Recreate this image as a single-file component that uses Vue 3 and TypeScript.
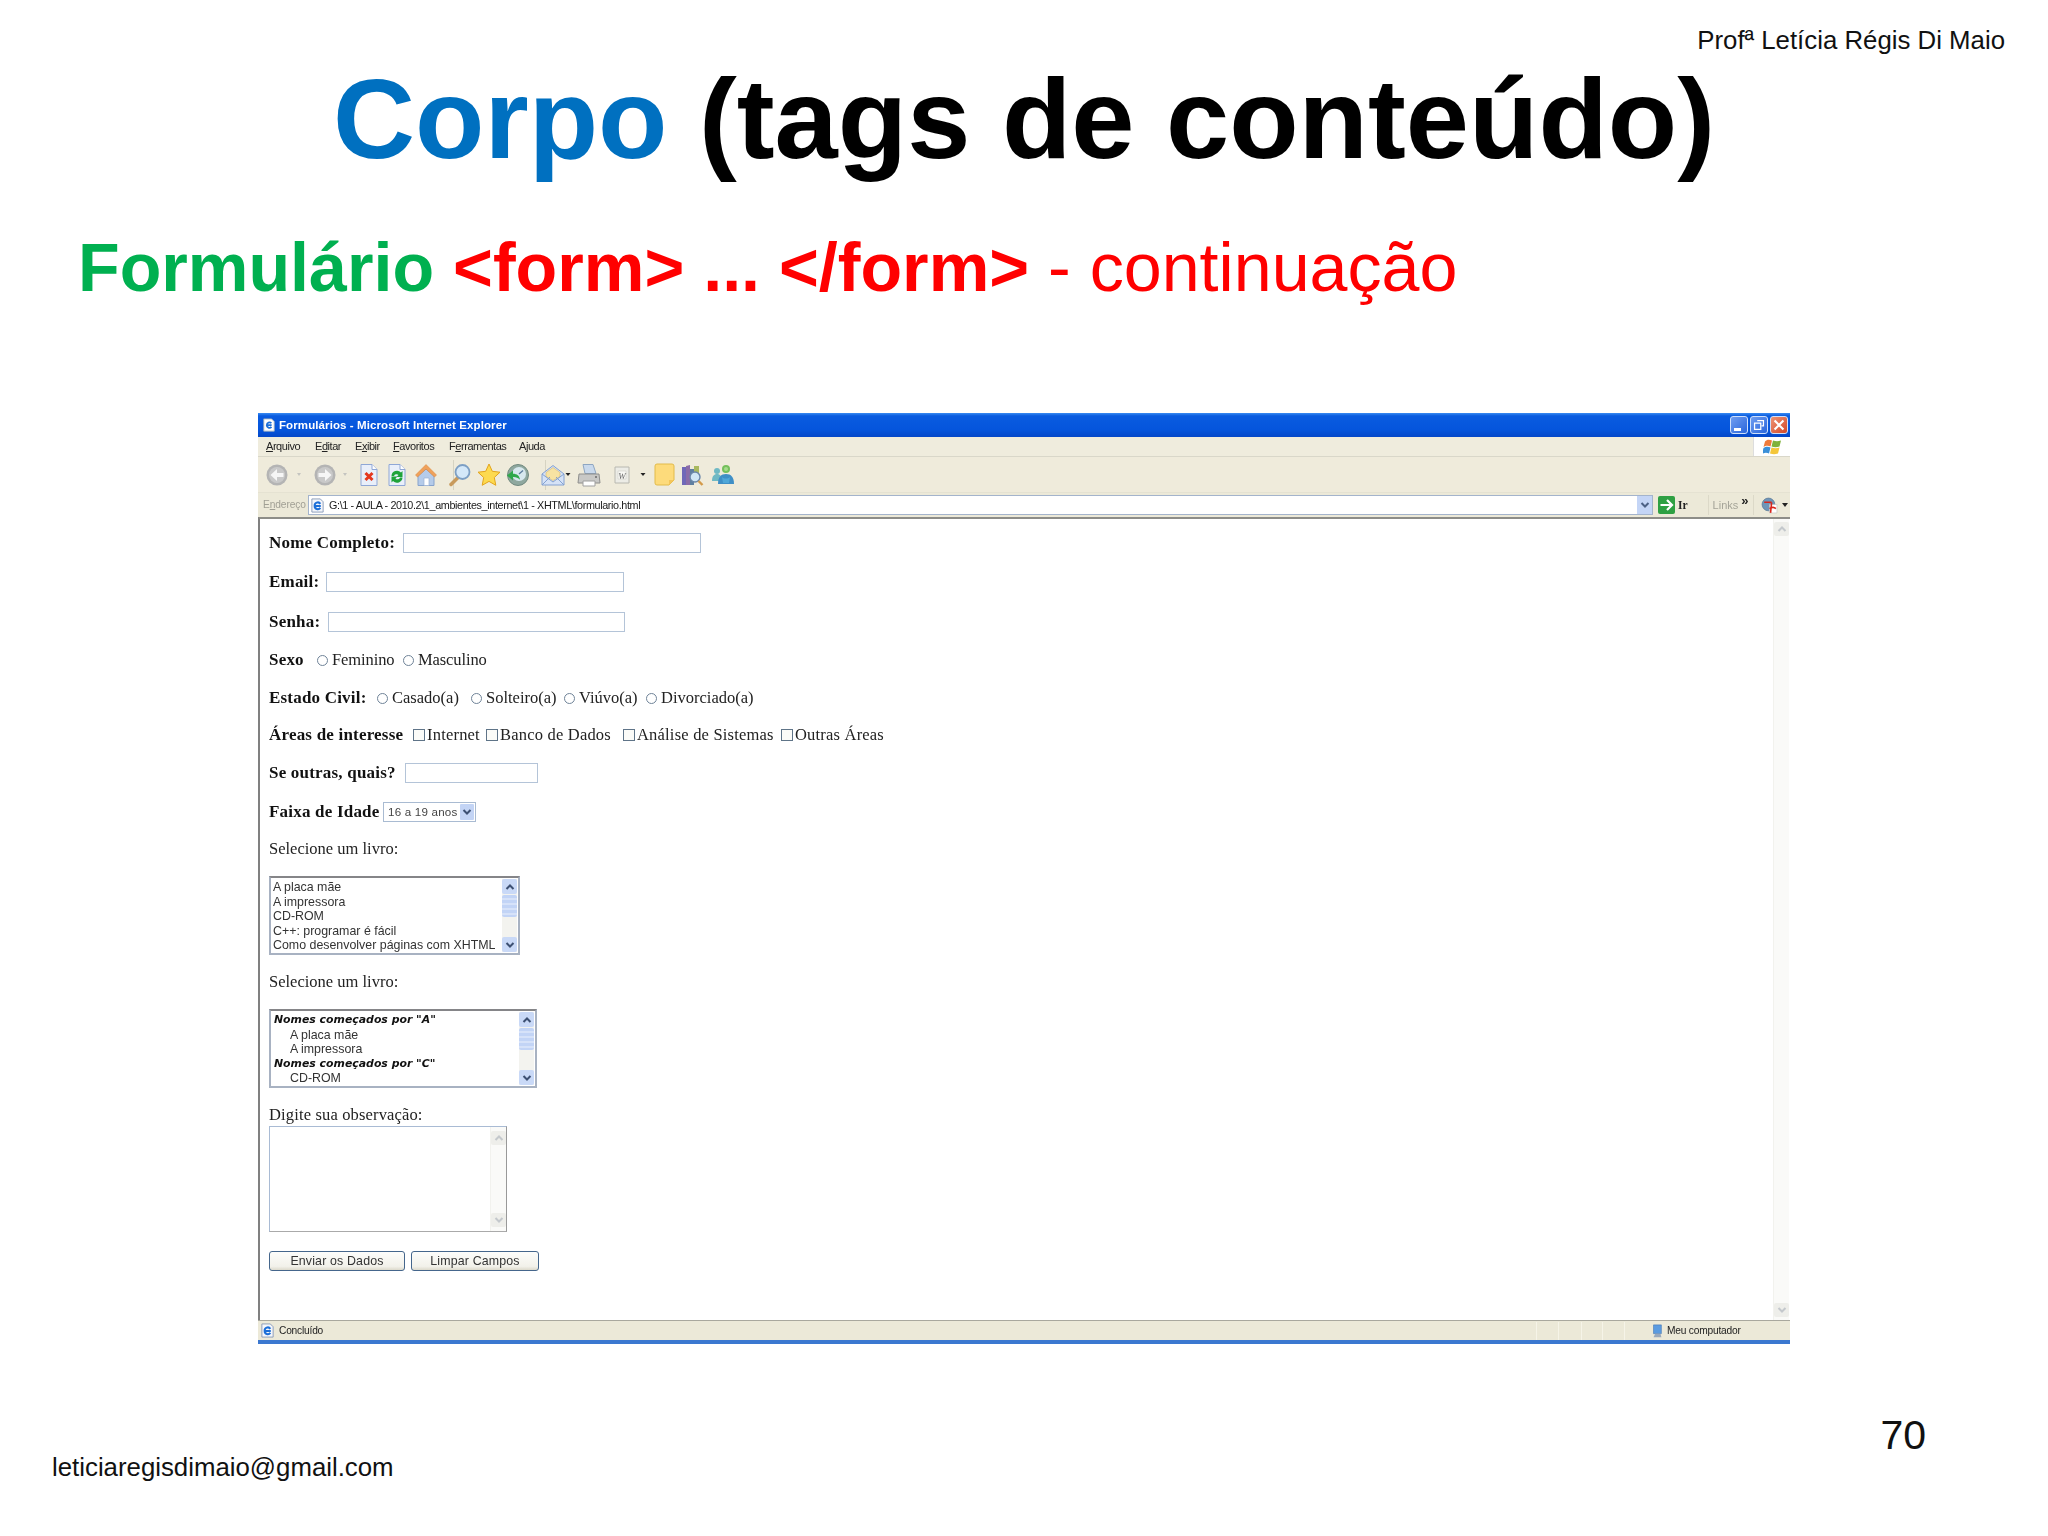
<script setup lang="ts">
interface Tool { cx: number; w: number; svg: string }
const doc = 'M4 1.5h11l5 5v16H4z'
const rawTools: Tool[] = [
  { cx: 277, w: 24, svg: '<circle cx="12" cy="12" r="10.5" fill="#b4b4b4"/><circle cx="12" cy="12" r="8" fill="#c9c9c9"/><path d="M5.5 12l6.5-6v4h6.5v4H12v4z" fill="#f6f6f6"/>' },
  { cx: 299, w: 6, svg: '<path d="M1 10h4l-2 3z" fill="#c4c4c0"/>' },
  { cx: 325, w: 24, svg: '<circle cx="12" cy="12" r="10.5" fill="#b4b4b4"/><circle cx="12" cy="12" r="8" fill="#c9c9c9"/><path d="M18.5 12l-6.5-6v4H5.5v4H12v4z" fill="#f6f6f6"/>' },
  { cx: 345, w: 6, svg: '<path d="M1 10h4l-2 3z" fill="#c4c4c0"/>' },
  { cx: 369, w: 24, svg: `<path d="${doc}" fill="#e9effa" stroke="#8fa7d6"/><path d="M15 1.5v5h5" fill="#fff" stroke="#8fa7d6"/><path d="M8.5 10l7 7m0-7l-7 7" stroke="#e4381f" stroke-width="3"/>` },
  { cx: 397, w: 24, svg: `<path d="${doc}" fill="#e9effa" stroke="#8fa7d6"/><path d="M15 1.5v5h5" fill="#fff" stroke="#8fa7d6"/><path d="M6.500 13a5.500 5.500 0 0 1 9.500-3.500l1.500-1.500v6h-6l2-2a2.700 2.700 0 0 0-4.500 1z" fill="#1fa33a"/><path d="M17.500 14.500a5.500 5.500 0 0 1-9.500 3.500L6.500 19.500v-6h6l-2 2a2.700 2.700 0 0 0 4.500-1z" fill="#1fa33a"/>` },
  { cx: 426, w: 24, svg: '<path d="M4 13l8-7 8 7v9.500H4z" fill="#b5cbe9" stroke="#87a3cc"/><path d="M10 15h5v7.500h-5z" fill="#fff" stroke="#9cb2d3" stroke-width=".7"/><path d="M12 1.500L1.500 12l2 2L12 6l8.500 8 2-2z" fill="#f0a15a" stroke="#d98339" stroke-width=".5"/>' },
  { cx: 460, w: 24, svg: '<path d="M3 21.500l7.500-7.500" stroke="#c89a5c" stroke-width="3.500" stroke-linecap="round"/><circle cx="14.500" cy="9" r="7" fill="#d4e8f9" stroke="#7d9fc4" stroke-width="1.800"/>' },
  { cx: 489, w: 24, svg: '<path d="M12 1l3.300 7.300 7.700.9-5.700 5.300 1.500 7.800L12 18.400 5.200 22.300l1.500-7.800L1 9.200l7.700-.9z" fill="#fdda4f" stroke="#e3a51e"/>' },
  { cx: 518, w: 24, svg: '<circle cx="12" cy="12" r="10.500" fill="#8fa89f" stroke="#71897f"/><circle cx="13" cy="11" r="7" fill="#d7e8ee"/><path d="M13 11l4-3.500" stroke="#5b7b9c" stroke-width="1.300"/><path d="M1 12.500l6-5v3.200c4 0 6.500 2 7 6-2-2-4-2.800-7-2.700v3.500z" fill="#2fa84b"/>' },
  { cx: 553, w: 26, svg: '<path d="M2 11L13 2.500 24 11v11H2z" fill="#d5e2f6" stroke="#84a2d2"/><path d="M6 9.500l7-5 7 5v4l-7 4-7-4z" fill="#f7e3a2" stroke="#d7b970" stroke-width=".6"/><path d="M2 22l8-8m14 8l-8-8M2 11l11 8 11-8" fill="none" stroke="#84a2d2"/>' },
  { cx: 568, w: 6, svg: '<path d="M.5 10h5l-2.500 3z" fill="#222"/>' },
  { cx: 589, w: 26, svg: '<path d="M7 1.500h10l3 9H9z" fill="#c9d9ec" stroke="#8ea6c2"/><path d="M3 11h20l1 9H2z" fill="#c8c8c6" stroke="#8e8e8c"/><path d="M7 18h12v5H7z" fill="#fff" stroke="#a0a0a0"/><circle cx="20" cy="14" r="1" fill="#6a6a6a"/>' },
  { cx: 622, w: 22, svg: '<path d="M4 4h14v16H4z" fill="#ecece6" stroke="#b8b8b0"/><path d="M7 8h8v8H7z" fill="#f8f8f4" stroke="#c8c8c0" stroke-width=".5"/><text x="11" y="15.500" text-anchor="middle" font-family="Liberation Serif" font-size="9" font-style="italic" fill="#666">W</text>' },
  { cx: 643, w: 6, svg: '<path d="M.5 10h5l-2.500 3z" fill="#222"/>' },
  { cx: 664, w: 24, svg: '<path d="M3 3a2 2 0 0 1 2-2h15a2 2 0 0 1 2 2v14l-5 5H5a2 2 0 0 1-2-2z" fill="#fddb7b" stroke="#e2bb4b"/><path d="M17 22v-5h5" fill="#f4c65a"/>' },
  { cx: 692, w: 24, svg: '<path d="M2 4h4v18H2z" fill="#7068b8"/><path d="M6 3l4-1v20H6z" fill="#8a6ca8"/><path d="M10 6h4v16h-4z" fill="#5f7fa0"/><path d="M14 3h5v12h-5z" fill="#a9b95f"/><circle cx="15" cy="14" r="5" fill="#cfe6f6" stroke="#6a86a8" stroke-width="1.400"/><path d="M18.500 18l4 4" stroke="#d39a4a" stroke-width="2.400"/>' },
  { cx: 723, w: 24, svg: '<circle cx="6" cy="8" r="3" fill="#6fb9c4"/><path d="M1 18c0-5 2-7 5-7s5 2 5 7z" fill="#6fb9c4"/><circle cx="15" cy="6" r="4" fill="#75c05c"/><circle cx="15" cy="6" r="2" fill="#a6dc8c"/><path d="M7 21c0-7 3-10 8-10s8 3 8 10z" fill="#3f8fc6"/><path d="M11 14c2 2 6 2 8 0l-1 6h-6z" fill="#4fa7d8"/>' },
]
const tools = rawTools.map((t, i) => {
  const prev = rawTools[i - 1]
  const prevRight = prev ? prev.cx + prev.w / 2 : 258
  return { ...t, ml: t.cx - t.w / 2 - prevRight }
})
const menus = [
  { a: '', u: 'A', b: 'rquivo', w: 49 },
  { a: 'E', u: 'd', b: 'itar', w: 40 },
  { a: 'E', u: 'x', b: 'ibir', w: 38 },
  { a: '', u: 'F', b: 'avoritos', w: 56 },
  { a: 'F', u: 'e', b: 'rramentas', w: 70 },
  { a: 'A', u: 'j', b: 'uda', w: 30 },
]
const sexo = [{ t: 'Feminino', w: 86 }, { t: 'Masculino', w: 90 }]
const civil = [{ t: 'Casado(a)', w: 94 }, { t: 'Solteiro(a)', w: 93 }, { t: 'Viúvo(a)', w: 82 }, { t: 'Divorciado(a)', w: 120 }]
const areas = [{ t: 'Internet', w: 73 }, { t: 'Banco de Dados', w: 137 }, { t: 'Análise de Sistemas', w: 158 }, { t: 'Outras Áreas', w: 120 }]
const books = ['A placa mãe', 'A impressora', 'CD-ROM', 'C++: programar é fácil', 'Como desenvolver páginas com XHTML']
const dividers = [22, 23, 21, 22, 22]
</script>

<template>
  <div class="slide">
    <div class="prof">Profª Letícia Régis Di Maio</div>
    <h1 class="title"><span class="blue">Corpo</span> (tags de conteúdo)</h1>
    <h2 class="subtitle"><b class="green">Formulário</b> <b>&lt;form&gt; ... &lt;/form&gt;</b> - continuação</h2>

    <div class="browser">
      <div class="titlebar">
        <svg class="ti" viewBox="0 0 16 16"><path d="M2 1h9l3 3v11H2z" fill="#fff" stroke="#9ab"/><path d="M11 8H5.500a3 3 0 0 1 5.200-2M5.500 8a3 3 0 0 0 5.300 2.200" fill="none" stroke="#1c6fd8" stroke-width="2"/></svg>
        <span class="tt">Formulários - Microsoft Internet Explorer</span>
        <div class="wbtns">
          <span class="wb"><i class="wmin"></i></span>
          <span class="wb"><svg viewBox="0 0 18 18"><path d="M7 4h7v6h-2M4 7h7v7H4z" fill="none" stroke="#fff" stroke-width="1.400"/></svg></span>
          <span class="wb close"><svg viewBox="0 0 18 18"><path d="M4 4l10 10M14 4L4 14" stroke="#fff" stroke-width="2.400"/></svg></span>
        </div>
      </div>
      <div class="menubar">
        <div class="menus">
          <span v-for="m in menus" :key="m.b" class="menu" :style="{ width: m.w + 'px' }">{{ m.a }}<u>{{ m.u }}</u>{{ m.b }}</span>
        </div>
        <div class="flagbox">
          <svg viewBox="0 3 18 15" class="flag"><path d="M2 5c2-2 4-2 7-1l-1.500 6c-2-1-5-1-7 .5z" fill="#ef7a3a"/><path d="M10 4c3 1 5 1 8 0l-1.500 6c-3 1-5 1-8 0z" fill="#7fb23a"/><path d="M.500 11.500c2-1.500 5-1.500 7-.5L6 17c-2-1-5-1-7 .5z" fill="#3a8fd8"/><path d="M8.500 11c3 1 5 1 8 0L15 17c-3 1-5 1-8 0z" fill="#f4c63a"/></svg>
        </div>
      </div>
      <div class="toolbar">
        <span v-for="(t, i) in tools" :key="t.cx" class="tool" :style="{ marginLeft: t.ml + 'px', width: t.w + 'px' }">
          <svg :width="t.w" height="24" :viewBox="`0 0 ${t.w} 24`" v-html="t.svg"></svg>
          <i v-if="i === 6 || i === 9" class="sep"></i>
        </span>
      </div>
      <div class="addressbar">
        <span class="addr-label">E<u>n</u>dereço</span>
        <div class="addr-box">
          <svg class="addr-ie" viewBox="0 0 16 16"><path d="M2 1h9l3 3v11H2z" fill="#f4f6fb" stroke="#8a9bb8"/><path d="M11.500 8.500H5a3.300 3.300 0 0 1 6-2.300M5 8.500a3.300 3.300 0 0 0 6 2" fill="none" stroke="#1c6fd8" stroke-width="2.200"/></svg>
          <span class="addr-text">G:\1 - AULA - 2010.2\1_ambientes_internet\1 - XHTML\formulario.html</span>
          <span class="addr-drop"><svg viewBox="0 0 10 10" width="10" height="10"><path d="M1.500 3L5 6.500 8.500 3" fill="none" stroke="#4d6185" stroke-width="2"/></svg></span>
        </div>
        <svg class="go" viewBox="0 0 17 18"><rect width="17" height="18" rx="2" fill="#2ea043"/><path d="M2.500 9h11M9 4l5 5-5 5" fill="none" stroke="#fff" stroke-width="2.200"/></svg>
        <span class="ir">Ir</span>
        <i class="grip"></i>
        <span class="links">Links</span>
        <b class="chev">»</b>
        <i class="grip g2"></i>
        <svg class="pdf" viewBox="0 0 16 16"><circle cx="7" cy="7" r="6" fill="#6e95b8" stroke="#51708f" stroke-width=".6"/><path d="M8 7h7v8H8z" fill="#fff" stroke="#bbb" stroke-width=".5"/><path d="M3 5h7M10 5l-1 10M8 11c3-2 5-1 6 0" fill="none" stroke="#d8261c" stroke-width="1.500"/></svg>
        <i class="caret"></i>
      </div>

      <div class="page">
        <form class="form" @submit.prevent>
          <div class="row"><label class="lbl w134">Nome Completo:</label><input class="txt" type="text" /></div>
          <div class="row g19"><label class="lbl w57">Email:</label><input class="txt" type="text" /></div>
          <div class="row g20"><label class="lbl w59">Senha:</label><input class="txt t2" type="text" /></div>
          <div class="row g18 tight"><label class="lbl w48">Sexo</label>
            <span v-for="o in sexo" :key="o.t" class="opt" :style="{ width: o.w + 'px' }"><input type="radio" class="radio" name="s" />{{ o.t }}</span>
          </div>
          <div class="row g18 even"><label class="lbl w108">Estado Civil:</label>
            <span v-for="o in civil" :key="o.t" class="opt" :style="{ width: o.w + 'px' }"><input type="radio" class="radio" name="c" />{{ o.t }}</span>
          </div>
          <div class="row g17 loose"><label class="lbl w144">Áreas de interesse</label>
            <span v-for="o in areas" :key="o.t" class="opt" :style="{ width: o.w + 'px' }"><input type="checkbox" class="check" />{{ o.t }}</span>
          </div>
          <div class="row g18"><label class="lbl w136">Se outras, quais?</label><input class="txt t3" type="text" /></div>
          <div class="row g19"><label class="lbl w114">Faixa de Idade</label>
            <div class="select"><span>16 a 19 anos</span><i class="sel-btn"><svg viewBox="0 0 10 10" width="10" height="10"><path d="M1.500 3L5 6.500 8.500 3" fill="none" stroke="#3d5073" stroke-width="2"/></svg></i></div>
          </div>
          <div class="row g17 even">Selecione um livro:</div>

          <div class="list l1 g17">
            <div class="list-items">
              <div v-for="b in books" :key="b" class="li">{{ b }}</div>
            </div>
            <div class="sb">
              <i class="sb-btn"><svg viewBox="0 0 10 10" width="10" height="10"><path d="M1.500 7L5 3.500 8.500 7" fill="none" stroke="#3d5073" stroke-width="2"/></svg></i>
              <i class="sb-thumb"></i><i class="sb-fill"></i>
              <i class="sb-btn"><svg viewBox="0 0 10 10" width="10" height="10"><path d="M1.500 3L5 6.500 8.500 3" fill="none" stroke="#3d5073" stroke-width="2"/></svg></i>
            </div>
          </div>
          <div class="row g17 even">Selecione um livro:</div>
          <div class="list l2 g17">
            <div class="list-items">
              <div class="li grp">Nomes começados por "A"</div>
              <div class="li ind">A placa mãe</div>
              <div class="li ind">A impressora</div>
              <div class="li grp">Nomes começados por "C"</div>
              <div class="li ind">CD-ROM</div>
            </div>
            <div class="sb">
              <i class="sb-btn"><svg viewBox="0 0 10 10" width="10" height="10"><path d="M1.500 7L5 3.500 8.500 7" fill="none" stroke="#3d5073" stroke-width="2"/></svg></i>
              <i class="sb-thumb"></i><i class="sb-fill"></i>
              <i class="sb-btn"><svg viewBox="0 0 10 10" width="10" height="10"><path d="M1.500 3L5 6.500 8.500 3" fill="none" stroke="#3d5073" stroke-width="2"/></svg></i>
            </div>
          </div>
          <div class="row g17 wide">Digite sua observação:</div>
          <div class="area">
            <div class="vsb small">
              <i class="vb"><svg viewBox="0 0 10 10" width="10" height="10"><path d="M1.500 7L5 3.500 8.500 7" fill="none" stroke="#c4c8cc" stroke-width="2"/></svg></i>
              <i class="vb"><svg viewBox="0 0 10 10" width="10" height="10"><path d="M1.500 3L5 6.500 8.500 3" fill="none" stroke="#c4c8cc" stroke-width="2"/></svg></i>
            </div>
          </div>
          <div class="row g19 btns">
            <button class="btn b1" type="submit">Enviar os Dados</button>
            <button class="btn b2" type="reset">Limpar Campos</button>
          </div>
        </form>
        <div class="vsb">
          <i class="vb"><svg viewBox="0 0 10 10" width="10" height="10"><path d="M1.500 7L5 3.500 8.500 7" fill="none" stroke="#c4c8cc" stroke-width="2"/></svg></i>
          <i class="vb"><svg viewBox="0 0 10 10" width="10" height="10"><path d="M1.500 3L5 6.500 8.500 3" fill="none" stroke="#c4c8cc" stroke-width="2"/></svg></i>
        </div>
      </div>

      <div class="status">
        <svg class="st-ie" viewBox="0 0 16 16"><path d="M2 1h9l3 3v11H2z" fill="#f4f6fb" stroke="#8a9bb8"/><path d="M11.500 8.500H5a3.300 3.300 0 0 1 6-2.300M5 8.500a3.300 3.300 0 0 0 6 2" fill="none" stroke="#1c6fd8" stroke-width="2.200"/></svg>
        <span class="st-text">Concluído</span>
        <i v-for="(d, i) in dividers" :key="i" class="st-div" :style="{ width: d + 'px' }"></i>
        <i class="st-last"></i>
        <svg class="st-pc" viewBox="0 0 16 16"><path d="M4 1h9v10H4z" fill="#5b9be0" stroke="#3a6fb0" stroke-width=".6"/><path d="M6 11l-2 4h9l-1-4z" fill="#9aa9bb"/></svg>
        <span class="st-text pc">Meu computador</span>
      </div>
      <div class="bluebar"></div>
    </div>

    <div class="foot">
      <span class="email">leticiaregisdimaio@gmail.com</span>
      <span class="num">70</span>
    </div>
  </div>
</template>

<style>
html, body { margin: 0; background: #fff; }
</style>

<style scoped>
.slide { width: 2048px; height: 1536px; background: #fff; display: flex; flex-direction: column; font-family: "Liberation Sans", Arial, sans-serif; color: #000; overflow: hidden; }
.prof { align-self: flex-end; margin: 25px 17px 0 0; padding-right: 26px; font-size: 25.8px; line-height: 30px; color: #111; }
.title { margin: 1px 0 0; text-align: center; font-size: 113.6px; line-height: 126px; font-weight: 700; }
.blue { color: #0070c0; }
.subtitle { margin: 42px 0 0 78px; font-size: 68.2px; line-height: 86px; font-weight: 400; color: #f00; white-space: pre; }
.green { color: #00b050; }
.browser { margin: 103px 0 0 258px; width: 1532px; height: 931px; display: flex; flex-direction: column; filter: blur(.45px); flex: none; }

.titlebar { height: 24px; display: flex; align-items: center; background: linear-gradient(#3a8cf2 0, #0a5ce0 12%, #0555dc 70%, #0447c8 100%); color: #fff; flex: none; }
.ti { width: 14px; height: 14px; margin-left: 4px; }
.tt { margin-left: 3px; font: 700 11.5px/24px "Liberation Sans", sans-serif; letter-spacing: .1px; }
.wbtns { margin-left: auto; display: flex; gap: 2px; margin-right: 2px; }
.wb { width: 18px; height: 18px; border: 1px solid #cfe0fb; border-radius: 3px; background: linear-gradient(135deg, #6f9df0, #2a66dc); box-sizing: border-box; display: flex; align-items: center; justify-content: center; }
.wb svg { width: 16px; height: 16px; }
.wmin { width: 7px; height: 3px; background: #fff; margin-top: 8px; margin-right: 3px; }
.close { background: linear-gradient(135deg, #ee9474, #d4492a); }

.menubar { height: 20px; display: flex; background: #efecdd; border-bottom: 1px solid #d9d7c9; box-sizing: border-box; flex: none; }
.menus { flex: 1; display: flex; padding-left: 8px; align-items: center; }
.menu { font: 11px/19px "Liberation Sans", sans-serif; color: #222; letter-spacing: -.45px; flex: none; }
.flagbox { width: 36px; background: #fff; display: flex; align-items: center; justify-content: center; border-left: 1px solid #ddd; }
.flag { width: 18px; height: 16px; margin-left: -1px; }

.toolbar { height: 36px; display: flex; align-items: center; background: #efebdb; border-bottom: 1px solid #e5e2d2; box-sizing: border-box; flex: none; }
.tool { position: relative; flex: none; height: 24px; display: block; }
.tool svg { display: block; }
.sep { position: absolute; right: -16px; top: -3px; width: 1px; height: 30px; background: #d6d3c2; }

.addressbar { height: 24px; display: flex; align-items: center; background: #ece9d8; flex: none; }
.addr-label { margin-left: 5px; width: 45px; flex: none; font: 10.2px/24px "Liberation Sans", sans-serif; color: #a09f94; letter-spacing: -.1px; }
.addr-box { width: 1345px; flex: none; height: 20px; background: #fff; border: 1px solid #a4b4cc; box-sizing: border-box; display: flex; align-items: center; }
.addr-ie { width: 15px; height: 15px; margin-left: 1px; }
.addr-text { margin-left: 4px; font: 10.8px/18px "Liberation Sans", sans-serif; color: #1a1a1a; letter-spacing: -.37px; white-space: pre; }
.addr-drop { margin-left: auto; width: 15px; height: 18px; background: #c4d5f6; display: flex; align-items: center; justify-content: center; }
.go { width: 17px; height: 18px; margin-left: 5px; flex: none; }
.ir { margin-left: 3px; font: 700 11.5px/24px "Liberation Serif", serif; color: #222; flex: none; }
.grip { width: 1px; height: 20px; background: #dcd9c8; margin-left: 20px; flex: none; }
.links { margin-left: 4px; font: 11px/24px "Liberation Sans", sans-serif; color: #a5a498; flex: none; }
.chev { margin-left: 3px; font: 700 13px/16px "Liberation Sans", sans-serif; color: #222; align-self: flex-start; flex: none; }
.grip.g2 { margin-left: 4px; }
.pdf { width: 17px; height: 17px; margin-left: 7px; flex: none; }
.caret { width: 0; height: 0; border: 3px solid transparent; border-top: 4px solid #222; margin-left: 4px; margin-top: 3px; flex: none; }

.page { flex: 1; min-height: 0; display: flex; background: #fff; border-top: 2px solid #8d8d88; border-left: 2px solid #808080; box-sizing: border-box; }
.form { flex: 1; padding: 14px 0 0 9px; display: flex; flex-direction: column; font: 16.5px/20px "Liberation Serif", serif; letter-spacing: 0; color: #222; }
.vsb { width: 16px; margin-right: 1px; background: #fafaf8; display: flex; flex-direction: column; justify-content: space-between; padding: 3px 0; box-sizing: border-box; border-left: 1px solid #f2f2ee; }
.vb { display: flex; width: 15px; height: 14px; background: #eeeeea; align-items: center; justify-content: center; border-radius: 2px; }
.row { height: 20px; display: flex; align-items: center; flex: none; white-space: pre; }
.g17 { margin-top: 17px; }
.g18 { margin-top: 18px; }
.g19 { margin-top: 19px; }
.g20 { margin-top: 20px; }
.tight { letter-spacing: -.1px; }
.even { letter-spacing: 0; }
.loose { letter-spacing: .2px; }
.wide { letter-spacing: .15px; }
.lbl { font-weight: 700; color: #111; flex: none; font-size: 17px; letter-spacing: .2px; }
.w134 { width: 134px; } .w57 { width: 57px; } .w59 { width: 59px; } .w48 { width: 48px; } .w108 { width: 108px; } .w144 { width: 144px; } .w136 { width: 136px; } .w114 { width: 114px; }
.txt { width: 298px; height: 20px; box-sizing: border-box; padding: 0; background: #fff; border: 1.5px solid #b4c4d8; flex: none; outline: 0; }
.t2 { width: 297px; }
.t3 { width: 133px; }
.opt { display: flex; align-items: center; flex: none; }
.radio { appearance: none; margin: 0 4px 0 0; width: 11px; height: 11px; border: 1px solid #6f8398; border-radius: 50%; background: #fff; flex: none; box-sizing: border-box; }
.check { appearance: none; margin: 0 2px 0 0; width: 12px; height: 12px; border: 1px solid #5f7488; background: #fbfbf8; flex: none; box-sizing: border-box; }
.select { width: 93px; height: 20px; box-sizing: border-box; border: 1px solid #a9bbd2; display: flex; align-items: center; justify-content: space-between; padding: 0 1px 0 4px; font: 11.6px/18px "Liberation Sans", sans-serif; letter-spacing: .2px; color: #444; }
.sel-btn { width: 14px; height: 16px; background: #c3d4f5; display: flex; align-items: center; justify-content: center; border-radius: 1px; }
.list { height: 79px; box-sizing: border-box; border: 2px solid #a8b2c2; border-top-color: #858588; display: flex; flex: none; padding: 1px 1px 1px 2px; background: #fff; }
.l1 { width: 251px; }
.l2 { width: 268px; }
.list-items { flex: 1; font: 12.4px/14.600px "Liberation Sans", sans-serif; letter-spacing: 0; color: #333; padding-top: 1px; overflow: hidden; white-space: pre; }
.grp { font: italic 700 10.900px/14.600px "DejaVu Sans", sans-serif; color: #111; padding-left: 1px; }
.ind { padding-left: 17px; }
.sb { width: 15px; display: flex; flex-direction: column; background: #f3f3ef; flex: none; }
.sb-btn { display: flex; height: 15px; background: #c9d9f7; align-items: center; justify-content: center; border-radius: 2px; }
.sb-thumb { height: 22px; margin-top: 1px; background: repeating-linear-gradient(#c2d4f6 0 3px, #d6e2f9 3px 5px); border-radius: 2px; }
.sb-fill { flex: 1; }
.area { margin-top: 1px; width: 238px; height: 106px; box-sizing: border-box; border: 1.5px solid #a9bbd4; border-right-color: #999; border-bottom-color: #aaa; display: flex; justify-content: flex-end; }
.small { margin: 0; padding: 4px 0; width: 16px; }
.btns { gap: 6px; }
.btn { height: 20px; box-sizing: border-box; border: 1.500px solid #45668c; border-radius: 3px; background: linear-gradient(#fdfdfb, #f2f1ea 80%, #dcd9cb); font: 12.4px/17px "Liberation Sans", sans-serif; letter-spacing: .15px; color: #333; padding: 0; }
.b1 { width: 136px; }
.b2 { width: 128px; }

.status { height: 20px; display: flex; align-items: center; background: #ece9d8; border-top: 1px solid #a9a89e; box-sizing: border-box; flex: none; }
.st-ie { width: 15px; height: 15px; margin-left: 2px; flex: none; }
.st-text { margin-left: 4px; font: 10.2px/18px "Liberation Sans", sans-serif; color: #222; letter-spacing: -.2px; width: 1257px; flex: none; }
.st-div { height: 18px; border-left: 1px solid #f6f4e8; box-sizing: border-box; flex: none; }
.st-last { width: 4px; flex: none; }
.st-pc { width: 14px; height: 16px; flex: none; }
.st-text.pc { width: auto; margin-left: 3px; letter-spacing: -.2px; }
.bluebar { height: 4px; background: #3b78d0; flex: none; }

.foot { flex: 1; display: flex; justify-content: space-between; align-items: flex-end; padding: 0 122px 53px 52px; }
.email { font-size: 25.8px; line-height: 32px; color: #111; }
.num { font-size: 41px; line-height: 48px; color: #111; margin-bottom: 24px; }
</style>
